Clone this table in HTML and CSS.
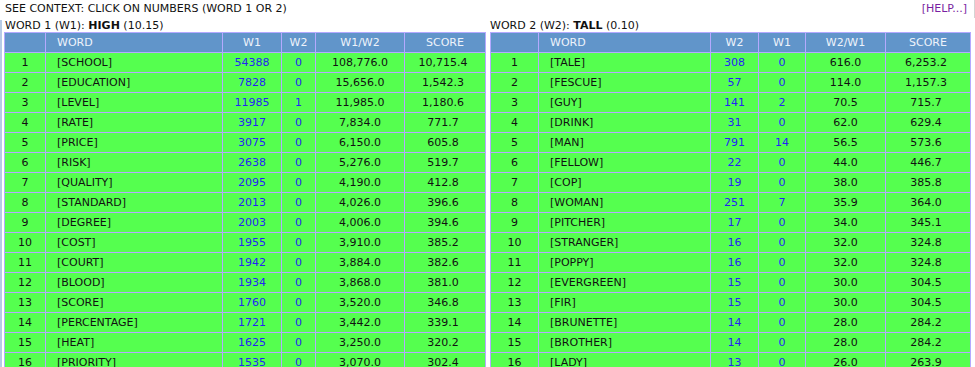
FILE: index.html
```html
<!DOCTYPE html>
<html>
<head>
<meta charset="utf-8">
<title>Compare</title>
<link rel="stylesheet" href="styles.css">
</head>
<body>
<div class="topbar">
  <span class="hint">SEE CONTEXT: CLICK ON NUMBERS (WORD 1 OR 2)</span>
  <a class="help" href="#">[HELP...]</a>
</div>
<div class="tables">
  <div class="panel panel-left">
    <div class="label">WORD 1 (W1): <b>HIGH</b> (10.15)</div>
    <table class="grid grid-left">
      <colgroup><col class="c1"><col class="c2"><col class="c3"><col class="c4"><col class="c5"><col class="c6"></colgroup>
      <thead><tr><th></th><th class="w">WORD</th><th>W1</th><th>W2</th><th>W1/W2</th><th>SCORE</th></tr></thead>
      <tbody>
        <tr><td>1</td><td class="w">[SCHOOL]</td><td><a href="#">54388</a></td><td><a href="#">0</a></td><td>108,776.0</td><td class="s">10,715.4</td></tr>
        <tr><td>2</td><td class="w">[EDUCATION]</td><td><a href="#">7828</a></td><td><a href="#">0</a></td><td>15,656.0</td><td class="s">1,542.3</td></tr>
        <tr><td>3</td><td class="w">[LEVEL]</td><td><a href="#">11985</a></td><td><a href="#">1</a></td><td>11,985.0</td><td class="s">1,180.6</td></tr>
        <tr><td>4</td><td class="w">[RATE]</td><td><a href="#">3917</a></td><td><a href="#">0</a></td><td>7,834.0</td><td class="s">771.7</td></tr>
        <tr><td>5</td><td class="w">[PRICE]</td><td><a href="#">3075</a></td><td><a href="#">0</a></td><td>6,150.0</td><td class="s">605.8</td></tr>
        <tr><td>6</td><td class="w">[RISK]</td><td><a href="#">2638</a></td><td><a href="#">0</a></td><td>5,276.0</td><td class="s">519.7</td></tr>
        <tr><td>7</td><td class="w">[QUALITY]</td><td><a href="#">2095</a></td><td><a href="#">0</a></td><td>4,190.0</td><td class="s">412.8</td></tr>
        <tr><td>8</td><td class="w">[STANDARD]</td><td><a href="#">2013</a></td><td><a href="#">0</a></td><td>4,026.0</td><td class="s">396.6</td></tr>
        <tr><td>9</td><td class="w">[DEGREE]</td><td><a href="#">2003</a></td><td><a href="#">0</a></td><td>4,006.0</td><td class="s">394.6</td></tr>
        <tr><td>10</td><td class="w">[COST]</td><td><a href="#">1955</a></td><td><a href="#">0</a></td><td>3,910.0</td><td class="s">385.2</td></tr>
        <tr><td>11</td><td class="w">[COURT]</td><td><a href="#">1942</a></td><td><a href="#">0</a></td><td>3,884.0</td><td class="s">382.6</td></tr>
        <tr><td>12</td><td class="w">[BLOOD]</td><td><a href="#">1934</a></td><td><a href="#">0</a></td><td>3,868.0</td><td class="s">381.0</td></tr>
        <tr><td>13</td><td class="w">[SCORE]</td><td><a href="#">1760</a></td><td><a href="#">0</a></td><td>3,520.0</td><td class="s">346.8</td></tr>
        <tr><td>14</td><td class="w">[PERCENTAGE]</td><td><a href="#">1721</a></td><td><a href="#">0</a></td><td>3,442.0</td><td class="s">339.1</td></tr>
        <tr><td>15</td><td class="w">[HEAT]</td><td><a href="#">1625</a></td><td><a href="#">0</a></td><td>3,250.0</td><td class="s">320.2</td></tr>
        <tr><td>16</td><td class="w">[PRIORITY]</td><td><a href="#">1535</a></td><td><a href="#">0</a></td><td>3,070.0</td><td class="s">302.4</td></tr>
      </tbody>
    </table>
  </div>
  <div class="panel panel-right">
    <div class="label">WORD 2 (W2): <b>TALL</b> (0.10)</div>
    <table class="grid grid-right">
      <colgroup><col class="c1"><col class="c2"><col class="c3"><col class="c4"><col class="c5"><col class="c6"></colgroup>
      <thead><tr><th></th><th class="w">WORD</th><th>W2</th><th>W1</th><th>W2/W1</th><th>SCORE</th></tr></thead>
      <tbody>
        <tr><td>1</td><td class="w">[TALE]</td><td><a href="#">308</a></td><td><a href="#">0</a></td><td>616.0</td><td class="s">6,253.2</td></tr>
        <tr><td>2</td><td class="w">[FESCUE]</td><td><a href="#">57</a></td><td><a href="#">0</a></td><td>114.0</td><td class="s">1,157.3</td></tr>
        <tr><td>3</td><td class="w">[GUY]</td><td><a href="#">141</a></td><td><a href="#">2</a></td><td>70.5</td><td class="s">715.7</td></tr>
        <tr><td>4</td><td class="w">[DRINK]</td><td><a href="#">31</a></td><td><a href="#">0</a></td><td>62.0</td><td class="s">629.4</td></tr>
        <tr><td>5</td><td class="w">[MAN]</td><td><a href="#">791</a></td><td><a href="#">14</a></td><td>56.5</td><td class="s">573.6</td></tr>
        <tr><td>6</td><td class="w">[FELLOW]</td><td><a href="#">22</a></td><td><a href="#">0</a></td><td>44.0</td><td class="s">446.7</td></tr>
        <tr><td>7</td><td class="w">[COP]</td><td><a href="#">19</a></td><td><a href="#">0</a></td><td>38.0</td><td class="s">385.8</td></tr>
        <tr><td>8</td><td class="w">[WOMAN]</td><td><a href="#">251</a></td><td><a href="#">7</a></td><td>35.9</td><td class="s">364.0</td></tr>
        <tr><td>9</td><td class="w">[PITCHER]</td><td><a href="#">17</a></td><td><a href="#">0</a></td><td>34.0</td><td class="s">345.1</td></tr>
        <tr><td>10</td><td class="w">[STRANGER]</td><td><a href="#">16</a></td><td><a href="#">0</a></td><td>32.0</td><td class="s">324.8</td></tr>
        <tr><td>11</td><td class="w">[POPPY]</td><td><a href="#">16</a></td><td><a href="#">0</a></td><td>32.0</td><td class="s">324.8</td></tr>
        <tr><td>12</td><td class="w">[EVERGREEN]</td><td><a href="#">15</a></td><td><a href="#">0</a></td><td>30.0</td><td class="s">304.5</td></tr>
        <tr><td>13</td><td class="w">[FIR]</td><td><a href="#">15</a></td><td><a href="#">0</a></td><td>30.0</td><td class="s">304.5</td></tr>
        <tr><td>14</td><td class="w">[BRUNETTE]</td><td><a href="#">14</a></td><td><a href="#">0</a></td><td>28.0</td><td class="s">284.2</td></tr>
        <tr><td>15</td><td class="w">[BROTHER]</td><td><a href="#">14</a></td><td><a href="#">0</a></td><td>28.0</td><td class="s">284.2</td></tr>
        <tr><td>16</td><td class="w">[LADY]</td><td><a href="#">13</a></td><td><a href="#">0</a></td><td>26.0</td><td class="s">263.9</td></tr>
      </tbody>
    </table>
  </div>
</div>
</body>
</html>
```

FILE: styles.css
```css
html, body {
  margin: 0;
  padding: 0;
  background: #ffffff;
}
body {
  font-family: "DejaVu Sans", Verdana, sans-serif;
  font-size: 11px;
  color: #111111;
}
.topbar {
  display: flex;
  justify-content: space-between;
  align-items: baseline;
  height: 18px;
  line-height: 18px;
  margin-bottom: 2px;
  padding: 0 7px 0 5px;
  border-right: 1px solid #d4d4d4;
}
.help {
  color: #7a1fa2;
  text-decoration: none;
}
.tables {
  display: flex;
  gap: 4px;
  border-left: 2px solid #b6cbe6;
  padding-left: 2px;
}
.label {
  line-height: 12px;
  height: 12px;
  white-space: nowrap;
}
.panel-left .label {
  padding-left: 1px;
}
.grid {
  border-collapse: collapse;
  table-layout: fixed;
  background: #55ff4f;
}
.grid-left { width: 481px; }
.grid-right { width: 480px; }
.grid-left .c1 { width: 41px; }
.grid-left .c2 { width: 177px; }
.grid-left .c3 { width: 59px; }
.grid-left .c4 { width: 34px; }
.grid-left .c5 { width: 89px; }
.grid-left .c6 { width: 81px; }
.grid-right .c1 { width: 48px; }
.grid-right .c2 { width: 172px; }
.grid-right .c3 { width: 48px; }
.grid-right .c4 { width: 47px; }
.grid-right .c5 { width: 80px; }
.grid-right .c6 { width: 85px; }
.grid th, .grid td {
  border: 1px solid #b4a9ff;
  padding: 0;
  height: 19px;
  text-align: center;
  white-space: nowrap;
  overflow: hidden;
}
.grid th {
  background: #6195ca;
  color: #eef3fb;
  font-weight: normal;
}
.grid .w {
  text-align: left;
  padding-left: 11px;
}
.grid td.s {
  padding-right: 4px;
}
.grid a {
  color: #2323f5;
  text-decoration: none;
}
```
